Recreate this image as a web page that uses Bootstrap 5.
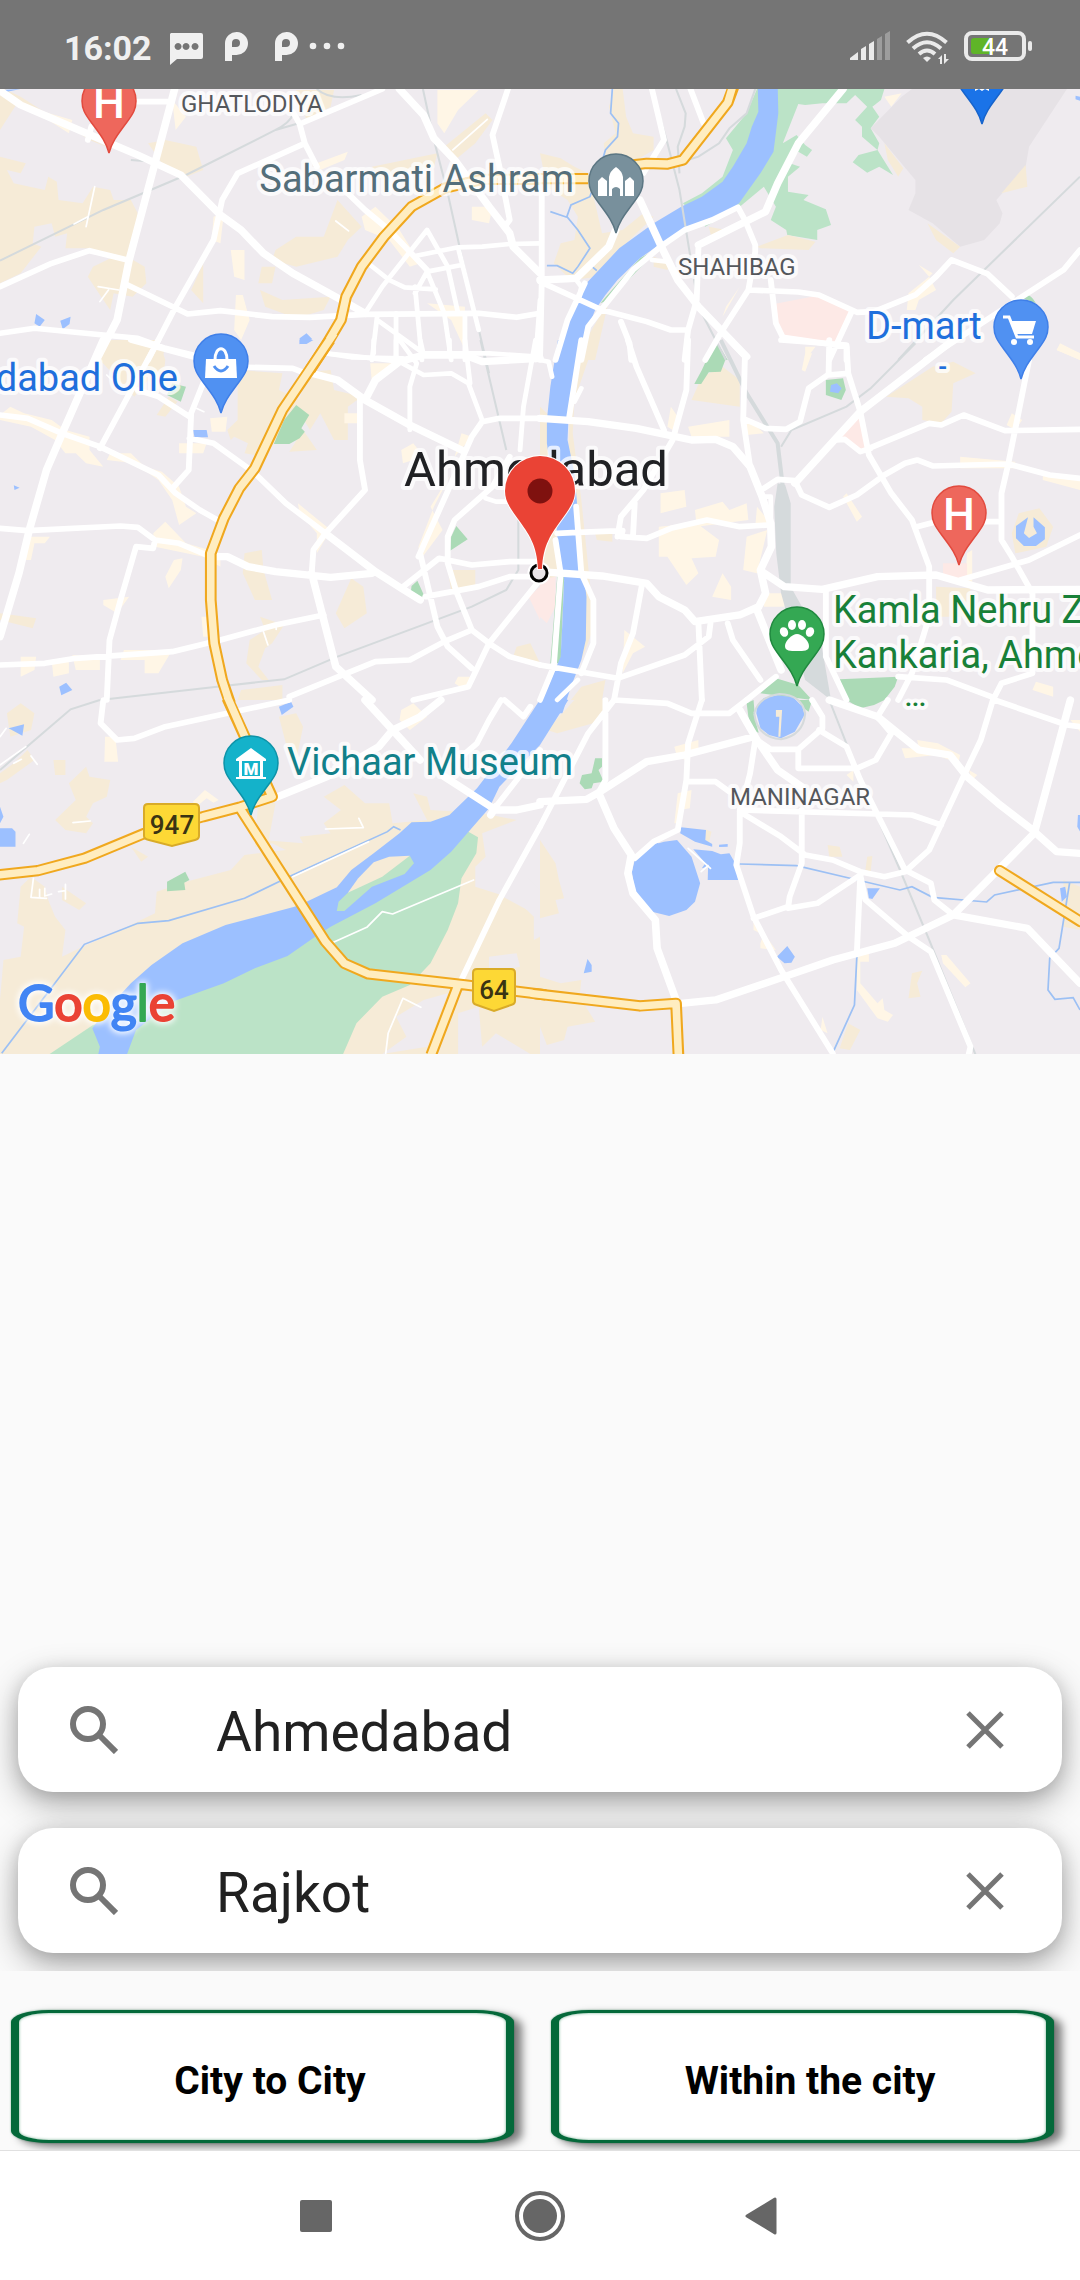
<!DOCTYPE html>
<html lang="en">
<head>
<meta charset="utf-8">
<meta name="viewport" content="width=device-width, initial-scale=1">
<title>Ride search</title>
<link rel="stylesheet" href="https://cdn.jsdelivr.net/npm/bootstrap@5.3.0/dist/css/bootstrap.min.css">
<style>
body{background:#fafafa;font-family:Roboto,"Noto Sans",sans-serif;color:#000}
.status-strip{height:89px;background:#757575;color:#f0f0f0;padding:6px 48px 0 64px}
.clock{font-size:34px;line-height:40px;font-weight:700;margin-right:16px}
.city-map{display:block;width:100%;height:auto;background:#efebef}
.city-map .road{fill:none;stroke:#fff;stroke-linecap:round;stroke-linejoin:round}
.city-map .case{fill:none;stroke:#f0a81e;stroke-width:34;stroke-linejoin:round}
.city-map .core{fill:none;stroke:#ffedc0;stroke-width:22;stroke-linejoin:round}
.city-map .rail{fill:none;stroke:#d5dadc;stroke-width:6}
.city-map .brook{fill:none;stroke:#9cc0f4;stroke-width:5}
.sand{fill:#f6ebd7}.mall{fill:#fff6e6}.park{fill:#bbe3c7}.grove{fill:#abdab6}.lake{fill:#9cc0ff}.clinic{fill:#fde9e6}
.w22{stroke-width:22}.w17{stroke-width:17}.w14{stroke-width:14}.w5{stroke-width:5}
.city-map text{font-family:Roboto,sans-serif;paint-order:stroke;stroke:#fff;stroke-opacity:.75;stroke-width:8px;stroke-linejoin:round}
.city-map .poi{font-size:38px}
.city-map .poi-more{font-size:24px;font-weight:700}
.city-map .area-name{font-size:24px;fill:#54575c}
.city-map .plate-no{font-size:26px;font-weight:500;fill:#3a3413;stroke:none;text-anchor:middle}
.city-map .glyph{stroke:none;fill:#fff;text-anchor:middle}
.city-map .brand{font-family:Lato,sans-serif;font-size:50px;stroke-width:2px;stroke-opacity:1}
.brand-halo{filter:drop-shadow(0 0 3px #fff) drop-shadow(0 0 3px rgba(255,255,255,.8))}
.search-stack{padding:36px 18px 18px;overflow:hidden;gap:36px}
.search-box{height:125px;border-radius:35px;background:#fff;padding:0 40px 0 52px;box-shadow:0 12px 34px rgba(0,0,0,.3),0 4px 18px rgba(0,0,0,.14)}
.search-box label{width:146px;color:#757575}
.search-box input{font-size:55px;line-height:64px;color:#212121;margin-top:4px}
.search-box button{color:#757575;width:74px;height:74px}
.trip-row{padding:39px 26px 7px 11px;gap:37px}
.trip-btn{height:133px;background:#fff;border:solid #04693a;border-width:3px 8px;border-radius:38px/12px;box-shadow:8px 4px 8px rgba(0,0,0,.5),0 0 2px #6fae8d,inset 0 0 3px #6fae8d;font-size:39px;line-height:46px;font-weight:700;color:#000;padding:8px 0 0 15px}
.nav-strip{height:130px;background:#fff;border-top:1px solid #e0e0e0;gap:139px;color:#666}
.nav-strip button{width:85px;height:85px}
</style>
<script src="https://cdn.jsdelivr.net/npm/bootstrap@5.3.0/dist/js/bootstrap.bundle.min.js"></script>
</head>
<body class="d-flex flex-column min-vh-100">
<header class="status-strip d-flex align-items-center">
  <span class="clock">16:02</span>
  <svg width="180" height="36" viewBox="168 31 180 36" fill="#f0f0f0" aria-hidden="true">
    <path fill-rule="evenodd" d="M171 34h30q2 0 2 2v22q0 2-2 2h-24l-7 6V35ZM178 44a3.500 3.500 0 1 0 .1 0M186 44a3.500 3.500 0 1 0 .1 0M195 44a3.500 3.500 0 1 0 .1 0"/>
    <path id="pmark" fill-rule="evenodd" d="M225 62V44a11.500 11.500 0 1 1 11 12h-4v6ZM236 40a4 4 0 0 0-4 4v4h4a4 4 0 0 0 0-8Z"/>
    <use href="#pmark" x="50"/>
    <circle cx="313" cy="47" r="3.300"/><circle cx="327" cy="47" r="3.300"/><circle cx="341" cy="47" r="3.300"/>
  </svg>
  <svg class="ms-auto" width="184" height="36" viewBox="848 31 184 36" fill="#eaeaea" aria-hidden="true">
    <path d="M850 61v-2l8-6v8ZM861 61V50l5-3v14ZM869 61V45l5-3v19Z"/><path fill="#9d9d9d" d="M877 61V40l5-3v24ZM885 61V35l5-3v29Z"/>
    <g fill="none" stroke="#eaeaea" stroke-width="4"><path d="M907.500 43.500Q927 26 946.500 43.500M913 49.500Q927 37 941 49.500M919 55Q927 48 935 55"/></g>
    <path d="M923 59q4-3 8 0l-4 4Z"/><path d="M938 60l4-4v9h-2v-5ZM944 55h2v5h3l-5 5Z"/>
    <rect x="966" y="34" width="58" height="26" rx="6" fill="none" stroke="#eaeaea" stroke-width="4"/>
    <rect x="1028" y="42" width="4" height="10" rx="2"/><path fill="#5fb528" d="M974 39h19v16h-19q-3 0-3-3V42q0-3 3-3Z"/>
    <text x="995" y="56" font-size="23" font-weight="500" text-anchor="middle" fill="#fff">44</text>
  </svg>
</header>

<main class="d-flex flex-column flex-grow-1">
<svg class="city-map" viewBox="0 89 1080 965" role="img" aria-label="Map of Ahmedabad">
<defs>
  <path id="pin" d="M0 52C-3 40-10 32-18 21C-24 13-27 8-27 0A27 27 0 0 1 27 0C27 8 24 13 18 21C10 32 3 40 0 52Z" stroke-width="1.500"/>
</defs>

<!-- land cover, one group per map tile -->
<g transform="scale(.3444 .3333)">
  <path class="sand" d="M0 260L60 290L120 330L200 380L260 420L330 450L270 420L170 370L100 340L50 310L0 390ZM0 470L75 490L60 520L20 510L40 550L130 570L140 530L165 545L170 600L240 610L270 560L320 570L330 600L380 600L400 640L395 740L370 770L420 800L425 850L385 890L330 880L320 930L300 900L255 830L270 800L330 770L260 745L190 745L195 700L160 710L150 670L100 680L95 730L120 740L60 820L0 850ZM430 430L480 420L570 440L590 510L540 530L470 490ZM980 600L1050 680L1010 720L980 770L860 800L790 780L800 750L860 710L940 710ZM760 800L800 800L790 850L750 850ZM590 790L590 910L555 870ZM755 870L820 900L960 890L940 930L860 955L770 920ZM1290 440L1410 340L1430 360L1380 430L1310 490ZM1080 500L1270 460L1260 500L1100 540ZM860 270H970L960 320L890 360ZM330 1020L480 1040L470 1080H300Z"/>
  <path class="mall" d="M110 330L210 360L200 400L140 360ZM500 300L540 350L510 390ZM620 650L650 640L640 730L615 720ZM670 750H710V840L680 830ZM685 885H705L725 960L700 1020L680 990ZM1050 650L1090 620L1160 690L1220 790L1190 800L1130 720L1060 690ZM920 490L1010 455L1000 480L930 510ZM1270 270H1390L1330 330L1290 400L1270 370ZM1370 620L1430 620L1420 670L1370 660ZM1240 910L1350 920V1050L1310 960Z"/>
  <path class="lake" d="M105 942L130 960L115 980L100 970ZM175 962L205 950L202 972L182 988ZM870 1015L890 1000L907 1018L870 1033ZM0 270L60 267L0 280Z"/>
</g>
<g transform="translate(540) scale(.3444 .3333)">
  <path fill="#e6e2e6" d="M1080 267H1530L1420 440L1410 500L1325 600L1343 640L1335 670L1290 720L1220 740L1140 670L1070 630L1090 580V540L985 410L960 385L1050 290Z"/>
  <path class="park" d="M630 267H1000L990 300L965 320L985 350L960 385L985 430L980 450L1025 525L985 500L950 518L908 487L925 465L980 450L935 410V380L915 360L950 320L915 285L890 310L820 310L770 315L750 312L705 430L745 405L770 435L790 450L775 470L750 455L725 490L755 500L720 530V575L780 585L765 600L830 628L845 675L805 690V720L718 705L715 690L670 660L685 620L650 560L580 620L480 680L415 610L470 580L530 530L560 450L540 415L600 340Z"/>
  <path class="sand" d="M215 267H240L250 350L270 400L330 410V450L280 480L190 470L185 430L220 400L200 320ZM0 460L60 475L100 500L140 520L180 700L240 690L300 640L330 650L200 780L170 830L90 840L40 790L60 730L100 720L110 650L80 600L20 560ZM490 680L540 690L500 720ZM630 740L720 705L800 725L780 750L640 745ZM1410 495L1415 560L1340 580ZM1125 670L1220 740L1200 760L1150 720ZM1000 430L1055 505L1040 530L1010 480ZM200 900L100 1080H160ZM330 770L380 790L370 810L330 800Z"/>
  <path class="mall" d="M1100 795L1140 820L1130 830L1150 870L1100 900L1090 930L1065 930L1070 880L1130 830ZM770 1040H800L770 1080ZM580 860L530 950L540 920ZM1510 1035L1568 1060V1080L1500 1050ZM1000 290L1050 280L1020 320Z"/>
  <path class="clinic" d="M680 912L800 888L905 930L860 1030L700 1015Z"/>
  <path class="grove" d="M510 1020L545 1080H480ZM1390 890Q1420 870 1440 910ZM290 775L350 740L200 900L175 910Z"/>
  <path class="lake" d="M1555 287L1568 290V302L1555 298Z"/>
</g>
<g transform="translate(0 340) scale(.3444 .3333)">
  <path class="sand" d="M310 0H460L480 60L470 150L430 120L390 170L290 60ZM490 170L515 185L480 230L455 225ZM690 90L820 100L810 150L870 180L800 300L770 350L710 340L720 310L680 290L670 300L660 270L690 240ZM900 95L960 90L970 150L1050 170L1010 200V300L970 300L930 220L900 270L860 200ZM880 270L920 330L840 335ZM710 640L760 630L765 690L790 780H740L705 700ZM1020 715L1055 740L1065 820L1000 865L975 820ZM755 830L825 855L790 910L770 925L750 980L780 1020H760L715 970L725 900L770 870ZM0 820L105 835L95 865L0 840ZM1300 690L1380 690V750H1310ZM1500 920L1540 910L1568 970L1490 950ZM700 1050L820 1035V1080H690Z"/>
  <path class="mall" d="M0 225L30 200L70 220L150 240L190 270L260 290L260 330L300 380L250 370L220 340H190L160 300L90 260L0 240ZM320 340L380 340L420 380L470 395L520 440L540 500L570 520L520 555L500 480L460 420L390 370L310 360ZM445 580L480 545L540 610L640 640L640 680L590 650L450 620ZM505 660L530 655L525 690L490 745L480 710ZM300 780L375 770L340 820L300 795ZM610 235L660 230L655 275H615ZM520 310L600 310L590 340H520ZM865 490L960 570L920 640V580L870 520ZM1075 70L1140 70L1080 130ZM1000 220H1050V250H1000ZM1165 330L1200 310L1230 350L1170 370ZM1310 400L1250 500L1285 570L1220 660L1215 620L1260 500ZM60 950H105L100 990L60 1010ZM150 960H200V1000L155 1010ZM210 945L290 950V990H220ZM360 930H500L460 1000H420V960H350ZM75 590L145 590L130 610L100 610L90 660H70ZM1340 280L1370 290L1320 350ZM1330 1010H1380L1350 1050L1320 1030ZM585 830H610V890H590Z"/>
  <path class="grove" d="M860 195L898 225L875 265L885 275L870 295L840 312H795L825 240ZM500 130L540 140L525 185L485 165ZM1325 558L1358 598L1307 632L1310 590ZM1212 722L1232 768L1215 774L1192 762L1195 738Z"/>
  <path class="lake" d="M560 270H600L604 292H565ZM172 1040L192 1028L210 1050L178 1066ZM870 0H910L890 12H870ZM40 436L57 443L42 450Z"/>
  <path class="clinic" d="M1535 770L1568 740V840Z"/>
</g>
<g transform="translate(540 340) scale(.3444 .3333)">
  <path class="sand" d="M115 0H160L100 180L95 280L120 480L150 780V880L120 960L90 900L80 400L90 100ZM470 110L530 80L580 120V200L440 180ZM1005 170L1140 80L1200 65L1265 100L1200 130L1195 215L1165 250L1110 240V200L1070 175ZM0 200L40 240L20 310L50 600L60 700L0 740ZM160 580H210V605L165 600ZM1390 520L1450 505L1490 560L1470 620L1380 640L1370 580ZM1150 740L1250 745L1240 830H1150ZM120 1040L190 1020L180 1080H90Z"/>
  <path class="mall" d="M350 460L420 450L425 500L350 520ZM450 510L530 485L550 510L600 490L605 540L455 560ZM345 560L455 550L520 600L510 650L440 655L460 700L425 735L370 650H345ZM600 590L660 570L630 700L590 690ZM630 500L670 550L625 560ZM530 700L555 740V780L500 770ZM380 200L400 230L400 280L370 260ZM430 260L550 240V290H440ZM600 230L650 280L600 285ZM245 870L305 920L270 940L240 1000ZM650 760H710V800H650ZM890 460L935 530L920 545L880 470ZM1220 350L1380 365V385H1220ZM1460 400L1568 420V450L1460 420ZM1370 220L1400 240L1380 270L1355 255ZM1240 640L1255 630V730L1235 720ZM1440 1025L1490 1040V1070L1430 1050ZM770 40H790L770 95L760 90ZM1510 10L1568 40V60L1500 30Z"/>
  <path class="clinic" d="M930 230L950 335L930 340L860 280ZM1170 670H1240V710L1215 730L1170 700ZM0 720L45 710V800L20 850L0 830Z"/>
  <path class="grove" d="M510 0L540 55L525 95L490 97L468 132H448L470 90ZM830 120L880 115L888 150L875 180L830 165ZM50 710H70L60 970H30ZM870 1018L1040 1010L1030 1040L1000 1080H895ZM640 1060L685 1015L750 1035L790 1080Z"/>
  <path class="lake" d="M845 135L862 130L876 145L866 160L842 155ZM1417 532L1410 560L1405 580L1420 594L1443 580L1433 560V532L1466 562V598L1440 618H1405L1382 595V558Z"/>
  <path fill="#d5dadc" d="M690 430L712 435L728 490V740L815 900L845 1080L770 1020L700 760L686 640L680 500Z"/>
</g>
<g transform="translate(0 700) scale(.3444 .3333)">
  <path class="sand" d="M0 220L40 190L80 150L100 180L20 240L0 250ZM20 40L60 10L100 40L90 90L30 110ZM155 180H190V225H160ZM200 250L250 200L260 230L320 240L310 290L270 310L250 350L270 370L250 400L190 390L160 360L220 300ZM380 440L430 470L410 485ZM810 50L860 40L880 80L860 180L830 130ZM750 300L800 310L780 420H760L880 430L870 410L960 400L940 370L990 330L940 290L1000 255L1060 310L1130 310L1140 370L1240 360L1200 280L1240 290L1250 330L1400 340L1500 360L1400 400L1410 470L1380 500L1380 560L1500 600L1550 650V720L1568 710V1062H1540L1440 1000L1400 1040L1390 920L1330 940V1062H0V900L10 780L60 770L70 680L50 670L60 560L90 530L130 560L140 600L160 650L190 690L180 770L240 740L350 690L450 640L455 575L540 545L670 510L710 465L830 450L790 430L740 440Z"/>
  <path class="sand" d="M180 560L250 610L230 630L180 600Z"/>
  <path fill="#efebef" d="M1450 490L1520 480L1510 510L1568 570V650L1460 590ZM1420 770L1500 760L1510 800L1420 820ZM1150 950L1230 900L1300 880L1240 1040L1110 1062L1180 1010Z"/>
  <path class="park" d="M1360 395L1388 412L1383 460L1340 535L1330 610L1300 690L1250 790L1190 855L1110 890L1035 970L995 1065H140L270 975L500 900L960 670L1250 500Z"/>
  <path class="mall" d="M1165 30L1200 10L1240 50L1190 90L1160 60ZM305 110H335L343 185H303ZM560 305L595 270L635 300L620 308L600 295L570 320Z"/>
  <path class="grove" d="M485 545L538 515L550 540L535 548L538 570L485 574Z"/>
  <path class="lake" d="M0 385H35L45 395V440H0ZM25 85L70 73L65 107ZM810 20L845 5L852 20L818 45ZM0 320L10 350L0 370Z"/>
</g>
<g transform="translate(540 700) scale(.3444 .3333)">
  <path class="sand" d="M100 0H200L170 65L50 100L20 90ZM0 420L45 490L55 540L70 595L45 600L55 640L0 655ZM0 830L60 850L120 840L115 890L160 965L80 980L70 1020L20 1035L0 980ZM480 388L498 395L490 430H480ZM835 435L870 440L878 470H840ZM950 470L965 468L960 515L945 510ZM1080 820L1110 812L1095 850L1105 890L1070 895ZM895 970L930 990L900 1050L870 1045ZM1520 540L1568 560V690L1520 680Z"/>
  <path class="mall" d="M390 140L460 120V160L420 180L395 160ZM400 280L440 270L435 325L405 330L400 370L390 370ZM1050 145L1100 145L1095 120L1155 130L1220 165L1215 190L1150 165L1060 175ZM890 225L910 210V245ZM640 730L650 700L685 750L640 745ZM1165 765H1180L1250 850L1235 862L1170 790ZM920 760H955V785H930V850L980 910L995 895L1000 930L1025 945L1010 965L980 955L920 870ZM820 950L835 1000L815 990ZM1245 210L1270 225L1255 240ZM620 650L640 700L620 690ZM1540 60H1568V95Z"/>
  <path class="grove" d="M600 10L620 0L625 60L635 98L615 90L605 50ZM750 0H790L780 35L760 20ZM890 0H1000L970 15L930 25ZM160 175H180V200L170 210L185 245L155 250L150 265L130 268L115 250L122 225L150 220Z"/>
  <path class="lake" d="M630 20L650-6L690-14L735-8L762 20L768 45L740 95L700 115L665 105L640 85L628 40ZM330 425L345 430L360 425L398 420L440 470L465 550L450 605L425 630L375 648L325 635L275 575L267 515L275 480ZM410 382L482 390L480 420L500 432V440L450 425L407 400ZM445 448L500 453L525 463L550 460L570 495L575 540H487L488 500L470 505L480 490ZM520 434L545 432V440L520 441ZM718 738L740 770L730 788L710 790L688 770ZM950 565H987L965 597L955 595ZM138 777L150 795L150 815L127 820ZM1510 565L1525 560L1530 590L1515 605ZM1562 345H1568V395L1560 380Z"/>
  <path class="sand" d="M685 30H703L698 110H692L695 50H685Z"/>
</g>

<!-- river -->
<g class="lake">
  <path transform="translate(540) scale(.3444 .3333)" d="M632 250H690L692 340L678 455L640 520L578 610L530 645L420 690L345 735L290 775L225 840L190 885L160 930L130 1010L110 1100H50L70 985L100 915L130 855L230 745L330 670L410 620L470 590L530 545L560 500L600 430L615 380L634 335Z"/>
  <path transform="translate(540 340) scale(.3444 .3333)" d="M52 0H115L100 110L85 180L80 300L100 400L110 520L115 600L125 690L135 770L133 900L120 960L90 1040L65 1120H-10L40 1000L60 950L65 850L70 720L50 590L40 450L20 310V240L30 140Z"/>
  <path transform="translate(0 700) scale(.3444 .3333)" d="M1580-20L1485 130L1385 265L1305 345L1250 365L1195 367L1160 400L1085 460L1020 510L978 562L890 605L855 620L655 675L530 730L440 795L380 850L300 940L268 985L290 1040L285 1065H368L395 990L500 905L650 850L740 805L835 768L915 710L960 680L1090 610L1250 510L1310 455L1420 325L1450 260L1568 135L1650 0Z"/>
</g>
<g transform="translate(0 700) scale(.3444 .3333)"><path class="park" d="M978 633L983 605L1010 578L1190 467L1202 490L1175 522L1080 560L1000 633Z"/><path class="sand" d="M1010 578L1040 535L1085 487L1130 470L1190 467L1110 530Z"/></g>

<!-- railways and brooks -->
<g transform="scale(.3444 .3333)"><path class="rail" d="M0 782L300 630L540 525L800 390L860 372L1110 267M800 390Q840 370 850 345M920 267Q960 305 1050 285M1228 267L1260 420L1300 580L1345 790L1420 1120M380 480L445 485"/></g>
<g transform="translate(540) scale(.3444 .3333)"><path class="rail" d="M325 267L370 430L405 570L435 760L460 920L540 1080M395 267L423 340L420 380L400 440L405 520M625 267L600 340L550 385L520 430L460 470L400 490M1568 530L1200 900L1040 1080"/>
<path class="brook" d="M210 267L205 340L228 370L225 410L190 450L170 520L145 590L90 615L78 650L110 690L145 745L110 800L95 820L50 797H20M30 635L78 652M140 790L165 812"/></g>
<g transform="translate(0 340) scale(.3444 .3333)"><path class="rail" d="M1395 0L1470 330M1505 500V690L1470 750L1370 800L980 950L825 1018L630 1040L290 1080"/></g>
<g transform="translate(540 340) scale(.3444 .3333)"><path class="rail" d="M1090 10L960 145L890 200L730 270L700 320"/><path class="rail" style="stroke-width:12" d="M525 0L600 160L690 310L705 440"/></g>
<g transform="translate(0 700) scale(.3444 .3333)"><path class="rail" d="M290 0L205 28L90 130L0 210"/><path class="brook" d="M5 1060L245 733L400 670L490 662L710 595L850 525L1125 395L1143 380L1163 390"/></g>
<g transform="translate(540 700) scale(.3444 .3333)"><path class="rail" d="M840 0L920 210L1045 510L1130 720L1265 1065"/><path class="rail" d="M622 40Q630 112 700 118Q765 105 770 40Q760-16 695-18Q635-10 622 40"/><path class="brook" d="M580 492L745 497L900 535L1045 570L1080 560L1140 592L1297 606L1320 585L1490 547H1568M1538 547L1507 745L1480 775L1475 870L1495 898L1548 893L1568 930M920 770L913 915L853 1052"/></g>

<!-- streets -->
<g transform="scale(.3444 .3333)" class="road">
  <path class="w22" d="M0 272L60 315L240 395L400 465L525 525L640 645L700 690L765 760L850 820L1000 905L1060 940M507 267L455 470L375 780L340 960L270 1100M1160 267L1230 345L1260 415L1320 480L1420 620L1480 700L1490 740L1568 820"/>
  <path class="w17" d="M400 305H490M1110 267L870 372L885 430L920 500M885 430L690 520L645 600L620 720L510 920L430 1080M870 372L850 335M1000 570L1060 630L1130 690L1240 810M0 860L150 790L260 752L370 780M360 850L545 942L640 932L790 950L900 952L1060 943L1390 940L1500 952L1568 940M0 1000L100 985L300 1005L400 1015L480 1045L560 1065M1475 267L1430 405L1450 500L1480 660L1465 680M265 380L255 420"/>
  <path class="w14" d="M1075 795L1130 840L1175 862L1265 868M1060 940L1110 860L1240 690L1300 800L1330 940M1205 768L1330 742L1400 740L1480 732L1568 730M1240 815L1340 795M1205 880L1240 815L1290 940L1310 1080M1205 860L1225 1080M1330 742L1390 990M1150 940V1080M1095 950L1080 1080M1095 960L1230 1060H1420L1560 1070M1350 940V1080M1555 1080L1568 900M945 1060L1020 1072L1170 1075"/>
  <path class="w5" d="M275 560L250 680M215 672L255 650M975 663L1012 693M285 860L345 870M290 905L315 870M1315 450L1415 358"/>
</g>
<g transform="translate(540) scale(.3444 .3333)" class="road">
  <path class="w22" d="M880 267L750 430L690 550L655 635L460 735M0 840L105 835L200 740L220 690M290 600L350 735L400 840L460 920L600 1070"/>
  <path class="w17" d="M325 267L360 420L300 520M437 267L475 370M5 580V850L0 1080M460 745L455 900L430 990L420 1080M0 845L180 930L310 965L380 990H425M350 740L420 690L500 660L575 622L595 660L625 735V755L605 870L530 990L480 1080M350 740L270 810L200 900L140 980L120 1080M130 850L80 960L45 1080M605 870L750 876L810 885L920 937L970 935L1090 885L1150 830L1195 780L1300 822L1370 890M670 840L685 970L705 1012L890 1040V1080M905 935L840 1080M235 965L260 1030L265 1080M1568 750L1520 810L1370 910L1120 1080"/>
  <path class="w14" d="M105 840L120 860L115 890M325 780L370 785"/>
</g>
<g transform="translate(0 340) scale(.3444 .3333)" class="road">
  <path class="w22" d="M300 0L185 270L135 390L85 570L55 700L0 890M905 100L980 120L1060 180L1190 255L1340 330M1060 180L1090 120L1160 65L1230 45H1350L1400 65L1568 55M945 580L1090 695L1165 745L1220 780M625 650H660L720 680L800 695L960 712L1080 700M905 700L975 980L1080 1080"/>
  <path class="w17" d="M0 565L80 572L350 558L400 562L450 600L520 610L600 645M0 225L80 235L180 280L290 320L460 405L510 460L580 510L640 545M460 0L290 325M380 0L560 50L640 80L850 85L900 105M590 130L555 220L548 390L505 440M400 150L460 170L550 230M550 295L620 310L735 395L830 490L945 580L1060 450L1045 360V180M945 580L910 630L905 700M450 600L445 625L395 620L350 780L318 900L310 1080M0 975L130 970L220 955L500 935L640 900L800 855L940 825M1165 745L1275 655L1370 675L1480 665H1568M1235 770L1390 740L1480 710H1560M1560 730L1420 910L1360 1040L1200 1080M1420 910L1370 870L1325 755L1300 670V590L1320 540L1430 440L1480 350M1215 650L1310 430L1370 290L1400 245L1450 235H1568M1220 640L1270 860L1300 920L1370 985M1420 910L1480 950L1568 975M840 1070L1090 965L1190 960L1290 905L1370 870"/>
  <path class="w14" d="M945 40L1040 50L1160 65L1230 105L1310 100L1360 130L1400 240M1190 270V140L1210 70L1160 0M1555 0L1520 200L1510 330M1410 475L1440 485H1500M1350 0L1365 130M1085 0V40M1150 0V60M1220 0L1230 45M1305 0V45"/>
  <path class="w5" d="M570 205L592 215M765 875L778 915M310 105L330 125M802 850V868"/>
</g>
<g transform="translate(540 340) scale(.3444 .3333)" class="road">
  <path class="w22" d="M0 235L140 245L280 265L440 300L510 298L560 320L610 380L645 470L670 550L672 620L640 690L655 760L630 810L700 990M1200 0L930 215L740 430M0 695L180 708L310 730L345 770L420 810L450 845L580 825L635 800M645 695L710 740L820 748L980 710L1150 705L1300 750L1568 748"/>
  <path class="w17" d="M120 0L85 230M255 0L280 80L360 270M430 0L425 150L385 300L300 450L235 530L225 590M550 0L595 50L590 240L610 380M50 580L110 577L240 572L235 590L310 595L380 565L485 540L580 560L665 555M270 590L275 490M600 240L655 265L715 268L755 245L780 145L835 105L895 100L930 215L955 345L1020 460L1080 540L1130 680V830L1080 1000L1040 1080M700 0L890 15L895 100M840 0L838 100M1420 60L1360 370L1340 460V600L1370 650L1430 760L1430 1000L1340 1030L1315 1080M955 325L1130 250L1165 255L1230 225L1350 272L1568 268M860 300L885 298L930 335L960 325M650 445L690 418L740 422L760 465L840 502L920 465L1000 405L1060 370L1095 360L1140 378L1360 372L1480 405L1568 415M1095 560L1150 545H1340M1220 720L1420 660L1568 585M295 740L270 880L235 970L215 1080M0 975L225 1015L420 945L490 890L495 850M460 850L470 1080M545 850L560 900L640 1020M830 750V950L890 1080M1040 1010L1180 1020L1310 1070M105 500L120 700L155 780V910L120 1000M45 600L60 700L40 980L0 1080M685 1010L600 1080"/>
  <path class="w14" d="M0 60L25 65L35 110M100 185L120 145M645 470H670V550M110 1020L50 1080"/>
</g>
<g transform="translate(0 700) scale(.3444 .3333)" class="road">
  <path class="w22" d="M800 293L950 230L1100 140L1140 90L1220 50L1280 0M1060 0L1220 180M1290 230L1440 330L1500 330L1568 315M1440 320L1425 345"/>
  <path class="w17" d="M300 0L292 70L340 120L390 115L480 80L660 40L840 0M1140 90L1220 180M1568 380L1450 600L1335 850M1568 150L1440 320M1455 0L1420 60L1385 130L1340 170M1465 0L1520 50L1540 20"/>
  <path class="w5" d="M0 195L75 140M0 110L18 85M40 190L62 178M90 168L108 193M68 430L85 403M212 368L262 363M97 535L90 592L135 595M115 568V590M130 565V588L150 582M170 575L190 572M190 553V597M945 387L1055 383L1042 355M850 530L1070 425M965 728L1065 682L1110 635L1140 642L1375 540M1120 1060L1127 1000L1170 895L1222 922"/>
</g>
<g transform="translate(540 700) scale(.3444 .3333)" class="road">
  <path class="w22" d="M0 305L135 298L170 278L310 185L420 165L620 110M170 278L215 385L265 465L255 520L270 580L335 660L340 745L395 900M410 910L510 900L710 830L850 780L1030 730L1200 645L1330 510L1435 400L1480 230L1540 0M1200 645L1415 685L1568 850M840 0L980 50L1100 150L1190 165L1240 230L1330 310L1430 390L1500 455L1568 460M580 30L630 120L690 210L760 260"/>
  <path class="w17" d="M0 380L140 100L215 0M190 0V240L170 278M215 0L370 10L440 40H550L600 0M470 0L430 130L425 240L400 390L330 425L275 475M425 245H510L550 275M625 120L610 220L580 340V430L570 495L620 650L700 810L850 1060M630 120L670 148H750L820 85V50L790 0M750 150V205H920L975 180L1020 100L980 50L1010 0M810 90L890 140L930 240L1060 510L1135 550L1145 600L1200 645M580 335L700 410L770 465L850 480L930 515L1000 530L1060 515L1130 450L1220 250L1280 120L1315 0M580 330L1080 345L1165 375M760 330V490L725 590L720 625L805 610L930 525L920 760M720 620L620 655M930 525L945 600L1070 710L1135 755L1250 1040L1245 1062M1320 0L1530 75L1568 80"/>
  <path class="w5" d="M430 445L495 505M468 515L488 497"/>
</g>

<!-- highways -->
<g transform="scale(.3444 .3333)"><path class="case" d="M1568 538H1400L1290 565L1195 620L1115 710L1050 800L1005 890L990 960L950 1030L900 1110"/><path class="core" d="M1580 538H1400L1290 565L1195 620L1115 710L1050 800L1005 890L990 960L950 1030L890 1130"/></g>
<g transform="translate(540) scale(.3444 .3333)"><path class="case" d="M-10 536H140M270 495L310 490L370 492L415 480L545 308L562 260"/><path class="core" d="M-15 536H140M270 495L310 490L370 492L415 480L545 308L562 250"/></g>
<g transform="translate(0 340) scale(.3444 .3333)"><path class="case" d="M958 0L820 210L740 385L695 445L650 535L612 640V780L622 910L645 1020L668 1090"/><path class="core" d="M970-20L820 210L740 385L695 445L650 535L612 640V780L622 910L645 1020L670 1100"/></g>
<g transform="translate(0 700) scale(.3444 .3333)">
  <path class="case" d="M660-5L715 120L790 290L695 322L590 350L420 400L245 475L110 512L-5 525M695 322L945 725L1000 790L1070 822L1350 855L1585 885M1330 855L1252 1065"/>
  <path class="core" d="M660-10L715 120L790 290L695 322L590 350L420 400L245 475L110 512L-5 525M695 322L945 725L1000 790L1070 822L1350 855L1585 885M1330 855L1250 1070"/>
</g>
<g transform="translate(540 700) scale(.3444 .3333)">
  <path class="case" d="M-10 882L290 918L395 910L402 1065M1570 665L1335 512" stroke-linecap="round"/><path class="core" d="M-20 881L290 918L395 910L402 1070M1580 671L1335 512" stroke-linecap="round"/>
</g>

<!-- place names -->
<text x="404" y="486" font-size="49" fill="#202124">Ahmedabad</text>
<text class="area-name" x="181" y="112">GHATLODIYA</text>
<text class="area-name" x="678" y="275">SHAHIBAG</text>
<text class="area-name" x="730" y="805">MANINAGAR</text>
<text class="poi" x="574" y="192" fill="#546e7a" text-anchor="end">Sabarmati Ashram</text>
<text class="poi" x="178" y="391" fill="#1f6fdc" text-anchor="end">dabad One</text>
<text class="poi" x="866" y="339" fill="#1f6fdc">D-mart</text>
<text class="poi-more" x="938" y="375" fill="#1f6fdc">-</text>
<text class="poi" x="833" y="623" fill="#188038">Kamla Nehru Z</text>
<text class="poi" x="833" y="668" fill="#188038">Kankaria, Ahme</text>
<text class="poi-more" x="905" y="706" fill="#188038">...</text>
<text class="poi" x="287" y="775" fill="#11808a">Vichaar Museum</text>

<g fill="#fdd835" stroke="#d9ab28" stroke-width="2"><path d="M148 804h47q4 0 4 4v28q0 3-4 4l-23 6-23-6q-5-1-5-4v-28q0-4 4-4Z"/><path d="M477 969h34q4 0 4 4v28q0 3-4 4l-17 6-17-6q-4-1-4-4v-28q0-4 4-4Z"/></g>
<text class="plate-no" x="172" y="834">947</text><text class="plate-no" x="494" y="999">64</text>

<!-- pins -->
<g transform="translate(109 101)"><use href="#pin" fill="#ee675c" stroke="#e24a3e"/><text class="glyph" y="17" font-size="45" font-weight="500">H</text></g>
<g transform="translate(959 513)"><use href="#pin" fill="#ee675c" stroke="#e24a3e"/><text class="glyph" y="17" font-size="45" font-weight="500">H</text></g>
<g transform="translate(221 361)"><use href="#pin" fill="#5091f2" stroke="#3f7fe8"/><path fill="#fff" d="M-15-2H15L16 17H-16Z"/><path fill="none" stroke="#fff" stroke-width="3" d="M-6-1C-6-16 6-16 6-1"/><path fill="none" stroke="#5091f2" stroke-width="3" d="M-7 5Q0 15 7 5"/></g>
<g transform="translate(1021 327)"><use href="#pin" fill="#5091f2" stroke="#3f7fe8"/><path fill="none" stroke="#fff" stroke-width="3" d="M-18-10h6l8 20h17"/><path fill="#fff" d="M-11-6H15L11 7H-6Z"/><circle cx="-7" cy="15" r="3" fill="#fff"/><circle cx="9" cy="15" r="3" fill="#fff"/></g>
<g transform="translate(616 181)"><use href="#pin" fill="#78909c" stroke="#5b7683"/><path fill="#fff" d="M-18 15V0l4-4 5 4v15ZM9 15V0l5-4 4 4v15ZM-7 15V-4q1-6 7-10q6 4 7 10v19h-3V8q-4-4-8 0v7Z"/></g>
<g transform="translate(982 72)"><use href="#pin" fill="#1a73e8" stroke="#1764cc"/><path fill="#fff" d="M-7 14v5l4-2 3 2 3-2 4 2v-5Z"/></g>
<g transform="translate(797 634)"><use href="#pin" fill="#34a853" stroke="#20893f"/><g fill="#fff"><ellipse cx="-13" cy="-2" rx="4" ry="5" transform="rotate(-25 -13 -2)"/><ellipse cx="-5" cy="-9" rx="4" ry="5"/><ellipse cx="5" cy="-9" rx="4" ry="5"/><ellipse cx="13" cy="-2" rx="4" ry="5" transform="rotate(25 13 -2)"/><path d="M0 0C5 0 12 7 12 12C12 17 7 17 0 17S-12 17-12 12C-12 7-5 0 0 0Z"/></g></g>
<g transform="translate(251 763)"><use href="#pin" fill="#14b2ca" stroke="#0d93a8"/><path fill="#fff" d="M-15-4L0-15L15-4V-2H12V14H15V16H-15V14H-12V-2H-15ZM-9-2V13H9V-2Z" fill-rule="evenodd"/><text class="glyph" y="12" font-size="17" font-weight="900">M</text></g>
<circle cx="539" cy="573" r="8" fill="#e8e4e8" stroke="#fff" stroke-width="7"/><circle cx="539" cy="573" r="8" fill="#e8e4e8" stroke="#000" stroke-width="3"/>
<path d="M538 569C537 545 529 534 518 519C510 508 505 501 505 491A35 35 0 0 1 575 491C575 501 570 508 562 519C551 534 543 545 542 569Z" fill="#ea4335" stroke="#fff" stroke-width="2" paint-order="stroke"/><circle cx="540" cy="491" r="12.500" fill="#7f110f"/>

<g class="brand-halo"><text class="brand" x="18" y="1021"><tspan fill="#4285f4" stroke="#4285f4">G</tspan><tspan fill="#ea4335" stroke="#ea4335">o</tspan><tspan fill="#fbbc04" stroke="#fbbc04">o</tspan><tspan fill="#4285f4" stroke="#4285f4">g</tspan><tspan fill="#34a853" stroke="#34a853">l</tspan><tspan fill="#ea4335" stroke="#ea4335">e</tspan></text></g>
</svg>

<form class="search-stack d-flex flex-column mt-auto">
  <div class="search-box d-flex align-items-center">
    <label for="from" aria-label="From city"><svg width="48" height="48" viewBox="0 0 48 48" fill="none" stroke="currentColor" stroke-width="6"><circle cx="18" cy="18" r="15"/><path d="M30 30L46 46"/></svg></label>
    <input id="from" type="text" class="border-0 bg-transparent p-0 flex-grow-1" value="Ahmedabad">
    <button type="button" class="btn border-0 p-0" aria-label="Clear from city"><svg width="38" height="38" viewBox="0 0 38 38" stroke="currentColor" stroke-width="5"><path d="M2 2L36 36M36 2L2 36"/></svg></button>
  </div>
  <div class="search-box d-flex align-items-center">
    <label for="dest" aria-label="To city"><svg width="48" height="48" viewBox="0 0 48 48" fill="none" stroke="currentColor" stroke-width="6"><circle cx="18" cy="18" r="15"/><path d="M30 30L46 46"/></svg></label>
    <input id="dest" type="text" class="border-0 bg-transparent p-0 flex-grow-1" value="Rajkot">
    <button type="button" class="btn border-0 p-0" aria-label="Clear to city"><svg width="38" height="38" viewBox="0 0 38 38" stroke="currentColor" stroke-width="5"><path d="M2 2L36 36M36 2L2 36"/></svg></button>
  </div>
</form>
<div class="trip-row d-flex">
  <button type="button" class="trip-btn flex-fill w-50">City to City</button>
  <button type="button" class="trip-btn flex-fill w-50">Within the city</button>
</div>
</main>
<nav class="nav-strip d-flex justify-content-center align-items-center" aria-label="System navigation">
  <button type="button" class="btn border-0 p-0" aria-label="Recent apps"><svg width="32" height="32" viewBox="0 0 32 32" fill="#666"><rect width="32" height="32" rx="2"/></svg></button>
  <button type="button" class="btn border-0 p-0" aria-label="Home"><svg width="50" height="50" viewBox="0 0 50 50"><circle cx="25" cy="25" r="23" fill="none" stroke="#666" stroke-width="4"/><circle cx="25" cy="25" r="17" fill="#666"/></svg></button>
  <button type="button" class="btn border-0 p-0" aria-label="Back"><svg width="38" height="38" viewBox="0 0 38 38"><path d="M30 2V36L2 19Z" fill="#666" stroke="#666" stroke-width="3" stroke-linejoin="round"/></svg></button>
</nav>
</body>
</html>
